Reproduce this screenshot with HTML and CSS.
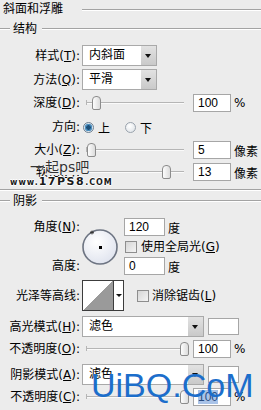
FILE: index.html
```html
<!DOCTYPE html>
<html lang="zh-CN">
<head>
  <meta charset="UTF-8" />
  <title>斜面和浮雕</title>
  <link rel="stylesheet" href="styles.css">
</head>
<body>
  <div class="panel">
    <div class="title"><span>斜面和浮雕</span></div>

    <!-- 结构 -->
    <div class="group-head"><span>结构</span></div>

    <div class="row row-style">
      <div class="lbl">样式(<u>T</u>):</div>
      <div class="select sel-short"><span class="sel-text">内斜面</span><span class="sel-btn"></span></div>
    </div>
    <div class="row row-method">
      <div class="lbl">方法(<u>Q</u>):</div>
      <div class="select sel-short"><span class="sel-text">平滑</span><span class="sel-btn"></span></div>
    </div>
    <div class="row row-depth">
      <div class="lbl">深度(<u>D</u>):</div>
      <div class="slider"><span class="thumb" style="left:6px"></span></div>
      <div class="field">100</div>
      <span class="unit">%</span>
    </div>
    <div class="row row-dir">
      <div class="lbl">方向:</div>
      <span class="radio on"></span><span class="radio-text">上</span>
      <span class="radio"></span><span class="radio-text">下</span>
    </div>
    <div class="row row-size">
      <div class="lbl">大小(<u>Z</u>):</div>
      <div class="slider"><span class="thumb" style="left:1px"></span></div>
      <div class="field">5</div>
      <span class="unit">像素</span>
    </div>
    <div class="row row-soft">
      <div class="lbl">软化(<u>F</u>):</div>
      <div class="slider"><span class="thumb" style="left:76px"></span></div>
      <div class="field">13</div>
      <span class="unit">像素</span>
    </div>
    <div class="group-end"></div>

    <!-- 阴影 -->
    <div class="group-head shadow-head"><span>阴影</span></div>

    <div class="angle-block">
      <div class="angle-labels">
        <div class="lbl">角度(<u>N</u>):</div>
        <div class="lbl">高度:</div>
      </div>
      <svg class="dial" width="36" height="36" viewBox="0 0 36 36">
        <defs>
          <radialGradient id="dialFill" cx="40%" cy="35%" r="70%">
            <stop offset="0" stop-color="#ffffff"/>
            <stop offset="1" stop-color="#dfe3ee"/>
          </radialGradient>
        </defs>
        <circle cx="18" cy="18" r="17" fill="url(#dialFill)" stroke="#6d7482" stroke-width="1.6"/>
        <rect x="17" y="17" width="3" height="3" fill="#000"/>
        <path d="M8 3.5h4M10 1.5v4M8.6 2.1l2.8 2.8M11.4 2.1l-2.8 2.8" stroke="#333" stroke-width="0.8"/>
      </svg>
      <div class="angle-fields">
        <div class="field-row"><div class="field f-angle">120</div><span class="unit">度</span></div>
        <div class="check"><span class="box"></span>使用全局光(<u>G</u>)</div>
        <div class="field-row"><div class="field f-angle">0</div><span class="unit">度</span></div>
      </div>
    </div>

    <div class="row row-contour">
      <div class="lbl">光泽等高线:</div>
      <div class="contour"><span class="contour-img"></span><span class="contour-btn"></span></div>
      <div class="check check-aa"><span class="box"></span>消除锯齿(<u>L</u>)</div>
    </div>

    <div class="row row-mode">
      <div class="lbl">高光模式(<u>H</u>):</div>
      <div class="select sel-long"><span class="sel-text">滤色</span><span class="sel-btn"></span></div>
      <span class="swatch"></span>
    </div>
    <div class="row row-opacity">
      <div class="lbl">不透明度(<u>O</u>):</div>
      <div class="slider"><span class="thumb" style="left:94px"></span></div>
      <div class="field">100</div>
      <span class="unit">%</span>
    </div>
    <div class="row row-mode2">
      <div class="lbl">阴影模式(<u>A</u>):</div>
      <div class="select sel-long"><span class="sel-text">滤色</span><span class="sel-btn"></span></div>
      <span class="swatch"></span>
    </div>
    <div class="row row-opacity2">
      <div class="lbl">不透明度(<u>C</u>):</div>
      <div class="slider"><span class="thumb" style="left:94px"></span></div>
      <div class="field"><span class="picked">100</span></div>
      <span class="unit">%</span>
    </div>

    <!-- watermarks -->
    <div class="wm-ps"><span class="wm-dash">一</span><span class="wm-name">起ps吧</span></div>
    <div class="wm-site">www.<b>17PS8</b>.COM</div>
    <div class="wm-uibq">UiBQ.CoM</div>
  </div>
</body>
</html>
```

FILE: styles.css
```css
html, body {
  margin: 0;
  padding: 0;
}

body {
  width: 261px;
  height: 410px;
  overflow: hidden;
  background: #ececec;
  color: #000;
  font-family: "DejaVu Sans", "Noto Sans CJK SC", sans-serif;
  font-size: 12px;
}

.panel {
  position: relative;
  height: 410px;
}

u {
  text-decoration: underline;
  text-underline-offset: 1px;
}

/* headers */
.title {
  display: flex;
  align-items: center;
  height: 19px;
}
.title span {
  width: 79px;
  padding-left: 3px;
  line-height: 19px;
}
.title::after {
  content: "";
  flex: 1;
  border-top: 1px solid #a3a3a3;
  border-bottom: 1px solid #fff;
}

.group-head {
  display: flex;
  align-items: center;
  height: 18px;
  margin-top: 1px;
}
.group-head::before {
  content: "";
  width: 10px;
  margin-right: 3px;
  border-top: 1px solid #a3a3a3;
  border-bottom: 1px solid #fff;
}
.group-head::after {
  content: "";
  flex: 1;
  margin-left: 5px;
  border-top: 1px solid #a3a3a3;
  border-bottom: 1px solid #fff;
}
.group-head span {
  line-height: 18px;
}

.group-end {
  margin-top: 8px;
  border-top: 1px solid #a3a3a3;
  border-bottom: 1px solid #fff;
}

.shadow-head {
  margin-top: 1px;
}

/* rows */
.row {
  display: flex;
  align-items: center;
}

.lbl {
  width: 80px;
  padding-right: 1px;
  text-align: right;
  white-space: nowrap;
  line-height: 18px;
}

.row-style   { margin-top: 7px; height: 21px; }
.row-method  { margin-top: 3px; height: 21px; }
.row-depth   { margin-top: 4px; height: 18px; }
.row-dir     { margin-top: 6px; height: 18px; }
.row-size    { margin-top: 5px; height: 18px; }
.row-soft    { margin-top: 4px; height: 18px; }
.row-contour { margin-top: 5px; height: 31px; }
.row-mode    { margin-top: 5px; height: 21px; }
.row-opacity { margin-top: 3px; height: 18px; }
.row-mode2   { margin-top: 6px; height: 21px; }
.row-opacity2 { margin-top: 3px; height: 18px; }

/* dropdown */
.select {
  display: flex;
  box-sizing: border-box;
  height: 21px;
  margin-left: 1px;
  border: 1px solid #a9a9a9;
  background: #fff;
}
.sel-short { width: 75px; }
.sel-long { width: 122px; }
.sel-text {
  flex: 1;
  padding-left: 6px;
  line-height: 19px;
}
.sel-btn {
  position: relative;
  width: 15px;
  border-left: 1px solid #fff;
  background: linear-gradient(#e2e2e2, #c9c9c9);
}
.sel-btn::after {
  content: "";
  position: absolute;
  left: 4px;
  top: 8px;
  border-left: 3.5px solid transparent;
  border-right: 3.5px solid transparent;
  border-top: 4px solid #111;
}

/* slider */
.slider {
  position: relative;
  width: 98px;
  height: 14px;
  margin-left: 5px;
}
.slider::before {
  content: "";
  position: absolute;
  left: 0;
  right: 0;
  top: 6px;
  border-top: 1px solid #b5b5b5;
  border-bottom: 1px solid #fafafa;
}
.slider::after {
  content: "";
  position: absolute;
  left: 0;
  top: 4px;
  height: 5px;
  border-left: 1px solid #b5b5b5;
}
.thumb {
  position: absolute;
  top: 0;
  box-sizing: border-box;
  width: 9px;
  height: 14px;
  border: 1px solid #8c8c8c;
  border-radius: 4px 4px 2px 2px;
  background: linear-gradient(90deg, #fdfdfd, #dcdcdc);
}

/* text fields */
.field {
  box-sizing: border-box;
  width: 38px;
  height: 18px;
  margin-left: 9px;
  padding-left: 4px;
  border: 1px solid #a6a6a6;
  background: #fff;
  font-family: "Liberation Sans", sans-serif;
  line-height: 16px;
}
.unit {
  margin-left: 3px;
}
.picked {
  background: #a9c3e8;
  color: #2a4c80;
}

/* radios */
.radio {
  box-sizing: border-box;
  width: 11px;
  height: 11px;
  margin-left: 15px;
  border: 1px solid #9aa3ad;
  border-radius: 50%;
  background: radial-gradient(circle at 40% 35%, #ffffff, #dadfe4);
}
.lbl + .radio {
  margin-left: 2px;
}
.radio.on {
  border-color: #6d7f91;
  background: radial-gradient(circle, #1c4f78 0 2px, #4d8fbf 2.5px 3.5px, #d7e3ec 4px);
}
.radio-text {
  margin-left: 4px;
}

/* angle block */
.angle-block {
  display: flex;
  height: 57px;
  margin-top: 8px;
}
.angle-labels {
  display: flex;
  flex-direction: column;
  justify-content: space-between;
}
.dial {
  display: block;
  margin: 11px 0 0 1px;
}
.angle-fields {
  display: flex;
  flex-direction: column;
  justify-content: space-between;
  margin-left: 6px;
}
.field-row {
  display: flex;
  align-items: center;
}
.field-row .field {
  margin-left: 0;
}
.f-angle {
  width: 41px;
}

/* checkboxes */
.check {
  display: flex;
  align-items: center;
  line-height: 16px;
  white-space: nowrap;
}
.check .box {
  box-sizing: border-box;
  width: 12px;
  height: 12px;
  margin: 0 4px 0 1px;
  border: 1px solid #8e8e8e;
  background: linear-gradient(135deg, #d6d6d6, #f4f4f4);
}
.check-aa .box {
  margin-left: 13px;
  margin-right: 3px;
}

/* contour picker */
.contour {
  display: flex;
  box-sizing: border-box;
  width: 42px;
  height: 31px;
  margin-left: 1px;
  border: 1px solid #3c3c3c;
  background: #fff;
}
.contour-img {
  width: 30px;
  border-right: 1px solid #3c3c3c;
  background: linear-gradient(to bottom right, #fff 50%, #9a9a9a 50%);
}
.contour-btn {
  position: relative;
  flex: 1;
}
.contour-btn::after {
  content: "";
  position: absolute;
  left: 2px;
  top: 13px;
  border-left: 3px solid transparent;
  border-right: 3px solid transparent;
  border-top: 3px solid #111;
}

.swatch {
  box-sizing: border-box;
  width: 31px;
  height: 17px;
  margin-left: 4px;
  border: 1px solid #a6a6a6;
  background: #fff;
}

/* watermarks */
.wm-ps {
  position: absolute;
  left: 30px;
  top: 160px;
  display: flex;
  font-size: 14px;
  line-height: 15px;
  color: #333;
  text-shadow: 0 0 1px #fff;
}
.wm-dash {
  width: 15px;
  overflow: hidden;
}
.wm-name {
  background: #ececec;
}

.wm-site {
  position: absolute;
  left: 10px;
  top: 177px;
  font-family: "DejaVu Sans", sans-serif;
  font-weight: bold;
  font-size: 8px;
  line-height: 10px;
  letter-spacing: 1px;
  color: #1a1a1a;
  text-shadow: 1px 0 #fff, -1px 0 #fff, 0 1px #fff, 0 -1px #fff;
}
.wm-site b {
  font-size: 11px;
  letter-spacing: 1.5px;
}

.wm-uibq {
  position: absolute;
  left: 91px;
  top: 368px;
  font-family: "Liberation Sans", sans-serif;
  font-size: 34px;
  line-height: 1;
  color: #1c6ecb;
}
```
